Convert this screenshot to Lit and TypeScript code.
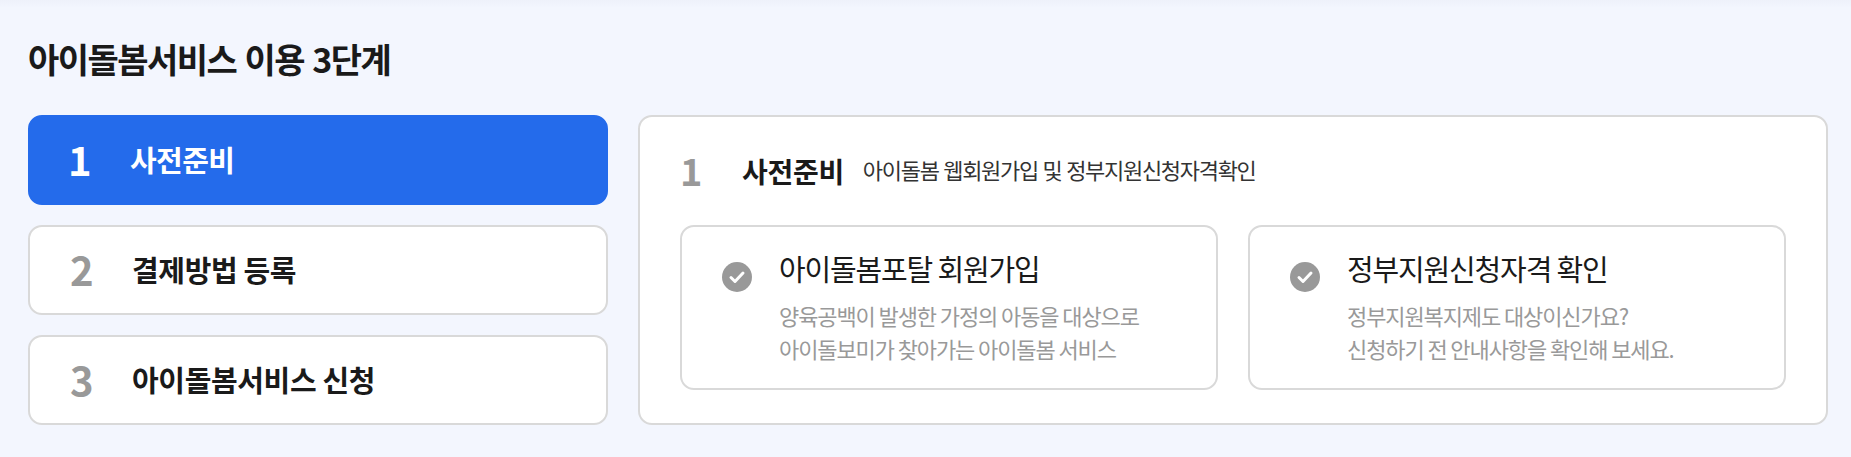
import { LitElement, css, html } from 'lit'
import { customElement } from 'lit/decorators.js'

const steps = [
  { no: '1', label: '사전준비', active: true },
  { no: '2', label: '결제방법 등록', active: false },
  { no: '3', label: '아이돌봄서비스 신청', active: false }
];

const cards = [
  { title: '아이돌봄포탈 회원가입', lines: ['양육공백이 발생한 가정의 아동을 대상으로', '아이돌보미가 찾아가는 아이돌봄 서비스'] },
  { title: '정부지원신청자격 확인', lines: ['정부지원복지제도 대상이신가요?', '신청하기 전 안내사항을 확인해 보세요.'] }
];

@customElement('app-root')
export class AppRoot extends LitElement {
  static styles = css`
    :host {
      display: block;
      font-family: "Noto Sans CJK KR", "Noto Sans", sans-serif;
      color: #1a1a1a;
    }

    .page {
      height: 457px;
      box-sizing: border-box;
      padding: 0 23px 0 28px;
      background: linear-gradient(#eef1fa, #f3f6fe 8px);
    }

    .page-title {
      margin: 0;
      padding-top: 36px;
      height: 115px;
      box-sizing: border-box;
      font-size: 34px;
      line-height: 46px;
      font-weight: 700;
      letter-spacing: -0.045em;
      word-spacing: 2px;
    }

    .content {
      display: flex;
      gap: 30px;
    }

    .steps {
      display: flex;
      flex-direction: column;
      gap: 20px;
      width: 580px;
    }

    .step {
      display: flex;
      align-items: center;
      height: 90px;
      box-sizing: border-box;
      padding-left: 40px;
      background: #fff;
      border: 2px solid #d9d9d9;
      border-radius: 14px;
    }

    .step-no {
      width: 62px;
      padding-bottom: 3px;
      font-size: 40px;
      font-weight: 700;
      color: #999;
    }

    .step-label {
      padding-bottom: 2px;
      font-size: 29px;
      font-weight: 700;
      letter-spacing: -0.36px;
    }

    .step.active {
      background: #246beb;
      border-color: #246beb;
    }

    .step.active .step-no {
      margin-left: -2px;
      color: #fff;
    }

    .step.active .step-label {
      letter-spacing: -0.6px;
      color: #fff;
    }

    .panel {
      flex: 1;
      height: 310px;
      box-sizing: border-box;
      padding: 0 40px;
      background: #fff;
      border: 2px solid #d9d9d9;
      border-radius: 14px;
    }

    .panel-head {
      display: flex;
      align-items: center;
      height: 108px;
    }

    .panel-no {
      width: 62px;
      padding-bottom: 4px;
      font-size: 38px;
      font-weight: 700;
      color: #999;
    }

    .panel-title {
      font-size: 28px;
      font-weight: 700;
      letter-spacing: -0.3px;
      margin-right: 19px;
    }

    .panel-desc {
      padding-bottom: 4px;
      font-size: 22px;
      letter-spacing: -1.3px;
      word-spacing: 1px;
      color: #333;
    }

    .cards {
      display: grid;
      grid-template-columns: 1fr 1fr;
      gap: 30px;
    }

    .card {
      display: flex;
      gap: 27px;
      height: 165px;
      box-sizing: border-box;
      padding: 19px 38px 0 40px;
      border: 2px solid #d9d9d9;
      border-radius: 14px;
    }

    .check {
      flex: none;
      width: 30px;
      height: 30px;
      margin-top: 16px;
    }

    .card-title {
      margin: 0 0 9px;
      font-size: 29px;
      line-height: 44px;
      font-weight: 400;
      letter-spacing: -0.04em;
    }

    .card-text {
      margin: 0;
      font-size: 22px;
      line-height: 33px;
      letter-spacing: -0.05em;
      color: #999;
    }
  `;

  renderCheck() {
    return html`
      <svg class="check" viewBox="0 0 30 30">
        <circle cx="15" cy="15" r="15" fill="#999"></circle>
        <path d="M9 15.5l4 4 8-8.5" fill="none" stroke="#fff" stroke-width="3" stroke-linecap="round" stroke-linejoin="round"></path>
      </svg>
    `;
  }

  render() {
    return html`
      <div class="page">
        <h2 class="page-title">아이돌봄서비스 이용 3단계</h2>
        <div class="content">
          <div class="steps">
            ${steps.map((s) => html`
              <div class="step ${s.active ? 'active' : ''}">
                <span class="step-no">${s.no}</span>
                <span class="step-label">${s.label}</span>
              </div>
            `)}
          </div>
          <div class="panel">
            <div class="panel-head">
              <span class="panel-no">1</span>
              <span class="panel-title">사전준비</span>
              <span class="panel-desc">아이돌봄 웹회원가입 및 정부지원신청자격확인</span>
            </div>
            <div class="cards">
              ${cards.map((c) => html`
                <div class="card">
                  ${this.renderCheck()}
                  <div>
                    <h3 class="card-title">${c.title}</h3>
                    <p class="card-text">${c.lines[0]}<br />${c.lines[1]}</p>
                  </div>
                </div>
              `)}
            </div>
          </div>
        </div>
      </div>
    `;
  }
}
